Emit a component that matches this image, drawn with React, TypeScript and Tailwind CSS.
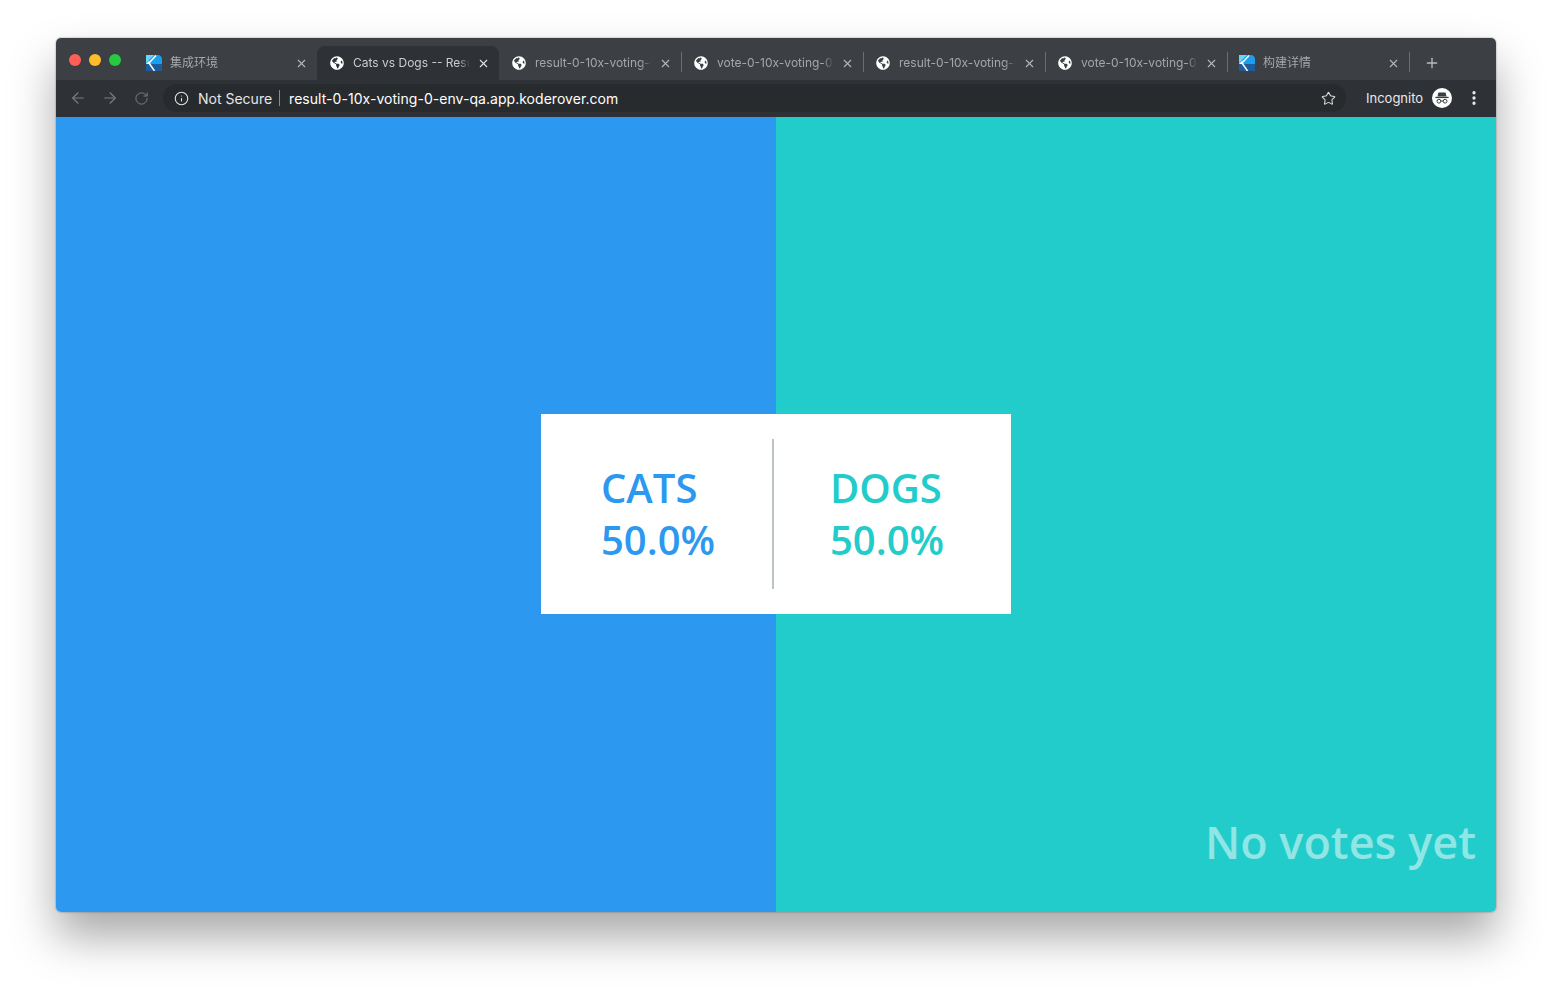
import React from "react";
import { ArrowLeft, ArrowRight, EllipsisVertical, Info, Plus, RotateCw, Star, X } from "lucide-react";
import { FaGlobeAmericas } from "react-icons/fa";

const tabs = [
  { title: "集成环境", icon: "k", pad: "pl-[11px]" },
  { title: "Cats vs Dogs -- Result", icon: "globe", active: true, pad: "pl-[13px]" },
  { title: "result-0-10x-voting-0-env", icon: "globe", sep: true, pad: "pl-[13px]" },
  { title: "vote-0-10x-voting-0-env-qa", icon: "globe", sep: true, pad: "pl-[13px]" },
  { title: "result-0-10x-voting-0-env", icon: "globe", sep: true, pad: "pl-[13px]" },
  { title: "vote-0-10x-voting-0-env-qa", icon: "globe", sep: true, pad: "pl-[13px]" },
  { title: "构建详情", icon: "k", sep: true, pad: "pl-[12px]" },
];

const KLogo = () => (
  <svg width="16" height="16" viewBox="0 0 16 16" className="shrink-0">
    <path d="M0 0H12C14.2 0 16 1.8 16 4V9H0Z" fill="#1a9ff0" />
    <path d="M0 9H16V16H0Z" fill="#1f5c9c" />
    <path d="M0 0H8L0 8Z" fill="#6fd2f7" />
    <path d="M10 0.5L3 8L8.5 16" fill="none" stroke="#fff" strokeWidth="1.5" />
    <path d="M0 9L3.4 5.6V9Z" fill="#fff" />
  </svg>
);

const IncognitoIcon = () => (
  <svg width="20" height="20" viewBox="0 0 20 20" className="shrink-0">
    <circle cx="10" cy="10" r="10" fill="#fff" />
    <path d="M6.4 4.6H13.6L14.5 8.4H5.5Z" fill="#3a3d41" />
    <rect x="3.4" y="8.8" width="13.2" height="1.3" fill="#3a3d41" />
    <circle cx="6.9" cy="13.2" r="1.9" fill="none" stroke="#3a3d41" strokeWidth="1" />
    <circle cx="13.1" cy="13.2" r="1.9" fill="none" stroke="#3a3d41" strokeWidth="1" />
    <path d="M8.8 13H11.2" stroke="#3a3d41" strokeWidth="1" />
  </svg>
);

const App = () => {
  return (
    <div className="w-[1552px] h-[986px] bg-white pt-[38px] pl-[56px] overflow-hidden font-['Inter',sans-serif]">
      <div className="w-[1440px] h-[874px] flex flex-col rounded-[5px] overflow-hidden shadow-[0_25px_45px_0_rgba(0,0,0,0.34),0_0_2px_rgba(0,0,0,0.45)]">
        {/* tab strip */}
        <div className="h-[42px] shrink-0 bg-[#3c4044] flex items-end">
          <div className="w-[79px] h-full shrink-0 flex items-start gap-2 pt-[16px] pl-[13px]">
            <span className="size-3 rounded-full bg-[#ff5f57]" />
            <span className="size-3 rounded-full bg-[#ffbd2e]" />
            <span className="size-3 rounded-full bg-[#28c941]" />
          </div>
          {tabs.map((tab, i) => (
            <div
              key={i}
              className={
                "w-[182px] h-[34px] shrink-0 flex items-center pr-[9px] relative " +
                tab.pad +
                (tab.active ? " rounded-t-[8px] bg-[#2e3135]" : "")
              }
            >
              {tab.icon === "k" ? <KLogo /> : <FaGlobeAmericas className="text-white size-[14px] shrink-0" />}
              <span
                className={
                  "flex-1 min-w-0 text-[12px] whitespace-nowrap overflow-hidden [mask-image:linear-gradient(to_right,black_90%,transparent)] font-['Inter','Noto_Sans_CJK_SC',sans-serif] " +
                  (tab.icon === "k" ? "ml-[8px] " : "ml-[9px] ") +
                  (tab.active ? "text-[#c9cccf]" : "text-[#a4a7aa]")
                }
              >
                {tab.title}
              </span>
              <X className={"size-[13px] shrink-0 ml-[7px] " + (tab.active ? "text-[#dfe1e3]" : "text-[#b4b7ba]")} strokeWidth={2} />
              {tab.sep && <span className="absolute right-[-1px] top-[6px] h-[20px] w-px bg-[#6b6f73]" />}
            </div>
          ))}
          <div className="h-[34px] flex items-center pl-[15px]">
            <Plus className="size-[16px] text-[#b9bcbf]" strokeWidth={2} />
          </div>
        </div>

        {/* toolbar */}
        <div className="h-[37px] shrink-0 bg-[#2e3135] flex items-center pb-px">
          <div className="flex items-center gap-[14px] pl-[13px] text-[#7b7f83]">
            <ArrowLeft className="size-[18px]" strokeWidth={1.5} />
            <ArrowRight className="size-[18px]" strokeWidth={1.5} />
            <RotateCw className="size-[15px] ml-[1px]" strokeWidth={1.6} />
          </div>
          <div className="ml-[14px] w-[1183px] h-[28px] rounded-full bg-[#282b2e] flex items-center pl-[11px] pr-[10px]">
            <Info className="size-[15px] text-[#e4e6e8]" strokeWidth={1.7} />
            <span className="ml-[9px] text-[14px] text-[#e4e6e8]">Not Secure</span>
            <span className="ml-[7px] h-[16px] w-px bg-[#8a8d90]" />
            <span className="ml-[9px] text-[14px] tracking-[0.04px] text-white">result-0-10x-voting-0-env-qa.app.koderover.com</span>
            <Star className="size-[15px] ml-auto text-[#d8dadc]" strokeWidth={1.7} />
          </div>
          <span className="ml-[20px] pt-px w-[57px] whitespace-nowrap text-[13px] text-[#e8eaec]">Incognito</span>
          <span className="ml-[9px]">
            <IncognitoIcon />
          </span>
          <EllipsisVertical className="size-[18px] ml-[13px] text-[#e8eaec]" strokeWidth={2.4} />
        </div>

        {/* result page */}
        <div className="flex-1 relative flex font-['Open_Sans',sans-serif]">
          <div className="w-1/2 bg-[#2d98f0]" />
          <div className="w-1/2 bg-[#21cccb]" />

          <div className="absolute left-[485px] top-[297px] w-[470px] h-[200px] bg-white flex items-center text-[40px] leading-[52px] font-semibold">
            <div className="w-[231px] pl-[60px] text-[#2d98f0]">
              <div>CATS</div>
              <div>50.0%</div>
            </div>
            <div className="w-[2px] h-[150px] bg-[#bcc3c7]" />
            <div className="flex-1 pl-[56px] text-[#21cccb]">
              <div>DOGS</div>
              <div>50.0%</div>
            </div>
          </div>

          <div className="absolute right-[20px] bottom-[40px] text-[45px] leading-[60px] font-semibold text-white/50">No votes yet</div>
        </div>
      </div>
    </div>
  );
};

export default App;
